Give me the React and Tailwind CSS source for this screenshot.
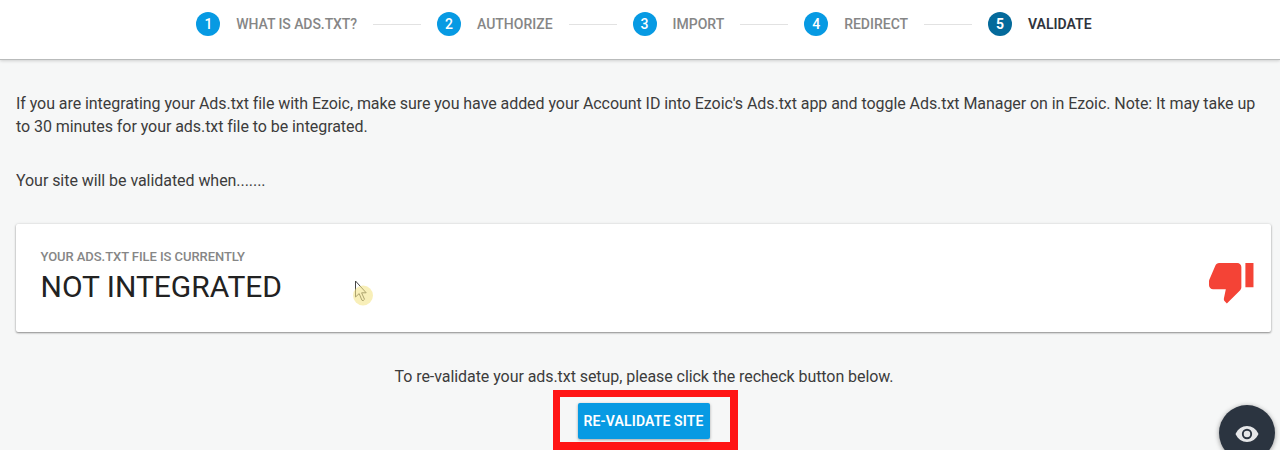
import React from "react";

const steps = [
  { label: "WHAT IS ADS.TXT?", width: 120.8 },
  { label: "AUTHORIZE", width: 75.6 },
  { label: "IMPORT", width: 51.8 },
  { label: "REDIRECT", width: 64 },
  { label: "VALIDATE", width: 63.5, active: true },
];

// Keeps each line of text at an exact measure.
function Line({ width, children }) {
  const ref = React.useRef(null);
  const [spacing, setSpacing] = React.useState(0);
  React.useLayoutEffect(() => {
    const natural = ref.current.getBoundingClientRect().width;
    setSpacing((width - natural) / ref.current.textContent.length);
  }, [width]);
  return (
    <span ref={ref} className="inline-block whitespace-nowrap" style={{ letterSpacing: spacing + "px" }}>
      {children}
    </span>
  );
}

function Stepper() {
  return (
    <header className="flex h-[60px] shrink-0 items-start border-b border-[#b9bbbb] bg-white pl-[196.4px] pt-[12px] shadow-[0_1px_3px_rgba(0,0,0,0.16)]">
      {steps.map((step, i) => (
        <React.Fragment key={step.label}>
          {i > 0 && <div className="mx-4 mt-[11.5px] h-px w-12 shrink-0 bg-[#e2e2e2]" />}
          <div className="flex h-6 shrink-0 items-center gap-[15.9px]">
            <div
              className={
                step.active
                  ? "flex size-6 items-center justify-center rounded-full bg-[#046a9b] text-[14px] font-bold text-white"
                  : "flex size-6 items-center justify-center rounded-full bg-[#079ae3] text-[14px] font-medium text-white"
              }
            >
              {i + 1}
            </div>
            <div
              className={
                (step.active ? "font-semibold text-[#2f343d] " : "font-medium text-[#868686] ") +
                "whitespace-nowrap text-[14px] leading-6"
              }
            >
              <Line width={step.width}>{step.label}</Line>
            </div>
          </div>
        </React.Fragment>
      ))}
    </header>
  );
}

function ThumbDown() {
  return (
    <svg viewBox="0 0 24 24" className="size-[48.5px]" fill="#f44336">
      <path d="M15 3H6c-.83 0-1.54.5-1.84 1.22l-3.02 7.05c-.09.23-.14.47-.14.73v2c0 1.1.9 2 2 2h6.31l-.95 4.57-.03.32c0 .41.17.79.44 1.06L9.83 23l6.59-6.59c.36-.36.58-.86.58-1.41V5c0-1.1-.9-2-2-2zm4 0v12h4V3h-4z" />
    </svg>
  );
}

export default function App() {
  return (
    <div className="relative flex h-[450px] w-[1280px] flex-col overflow-hidden bg-[#f6f7f7] font-['Roboto',sans-serif] text-[#3c3c3c]">
      <Stepper />
      <main className="flex flex-col pl-4 pt-[32px] text-[16px] leading-[23px]">
        <p>
          <Line width={1238.5}>
            If you are integrating your Ads.txt file with Ezoic, make sure you have added your Account ID into Ezoic's Ads.txt app and toggle Ads.txt Manager on in Ezoic. Note: It may take up
          </Line>
          <br />
          <Line width={351}>to 30 minutes for your ads.txt file to be integrated.</Line>
        </p>
        <p className="mt-[31px]">
          <Line width={249.5}>Your site will be validated when.......</Line>
        </p>
        <section className="mt-[32px] flex h-[108px] w-[1255px] justify-between rounded-[2px] bg-white pl-[24.5px] pr-[16px] shadow-[0_1px_2px_rgba(0,0,0,0.4),0_0_3px_rgba(0,0,0,0.12)]">
          <div className="pt-[24px]">
            <div className="text-[13px] font-medium leading-[18px] text-[#868686]">
              <Line width={204.5}>YOUR ADS.TXT FILE IS CURRENTLY</Line>
            </div>
            <div className="pt-px text-[30px] leading-[40px] text-[#222]">
              <Line width={241.5}>NOT INTEGRATED</Line>
            </div>
          </div>
          <div className="pt-[33px]">
            <ThumbDown />
          </div>
        </section>
        <p className="mt-[33px] pl-[378.5px]">
          <Line width={499}>To re-validate your ads.txt setup, please click the recheck button below.</Line>
        </p>
        <div className="ml-[537px] mt-[2px] flex h-[60px] w-[185px] border-b-8 border-l-[7px] border-r-8 border-t-[7px] border-[#ff1414] pl-[17.5px] pt-[6px]">
          <button className="h-[36px] w-[132px] rounded-[2px] bg-[#079ae3] text-[14px] font-semibold text-white shadow-[0_1px_3px_rgba(0,0,0,0.35)]">
            <Line width={120}>RE-VALIDATE SITE</Line>
          </button>
        </div>
      </main>
      <svg className="absolute left-[350px] top-[275px] h-[36px] w-[28px]" viewBox="0 0 28 36">
        <path d="M5.5 6v16l3.7-3.4 2.7 6.6q1.2 1.3 2.6-.9l-2.9-6.5h4.6z" fill="#fff" stroke="#444" strokeWidth="1" />
        <circle cx="13" cy="20.5" r="10" fill="#f3e58a" fillOpacity="0.6" />
      </svg>
      <button className="absolute left-[1219px] top-[405px] flex size-[56px] items-center justify-center rounded-full bg-[#2b3440] pt-[2px] shadow-[0_1px_5px_rgba(0,0,0,0.4)]">
        <svg viewBox="0 0 24 16" className="h-[16px] w-[24px]">
          <path d="M.5 8C3 2.8 7 0 12 0s9 2.8 11.5 8C21 13.200 17 16 12 16S3 13.200.5 8z" fill="#e6e7e9" />
          <circle cx="12" cy="8" r="4.200" fill="#e6e7e9" stroke="#2b3440" strokeWidth="1.900" />
        </svg>
      </button>
    </div>
  );
}
